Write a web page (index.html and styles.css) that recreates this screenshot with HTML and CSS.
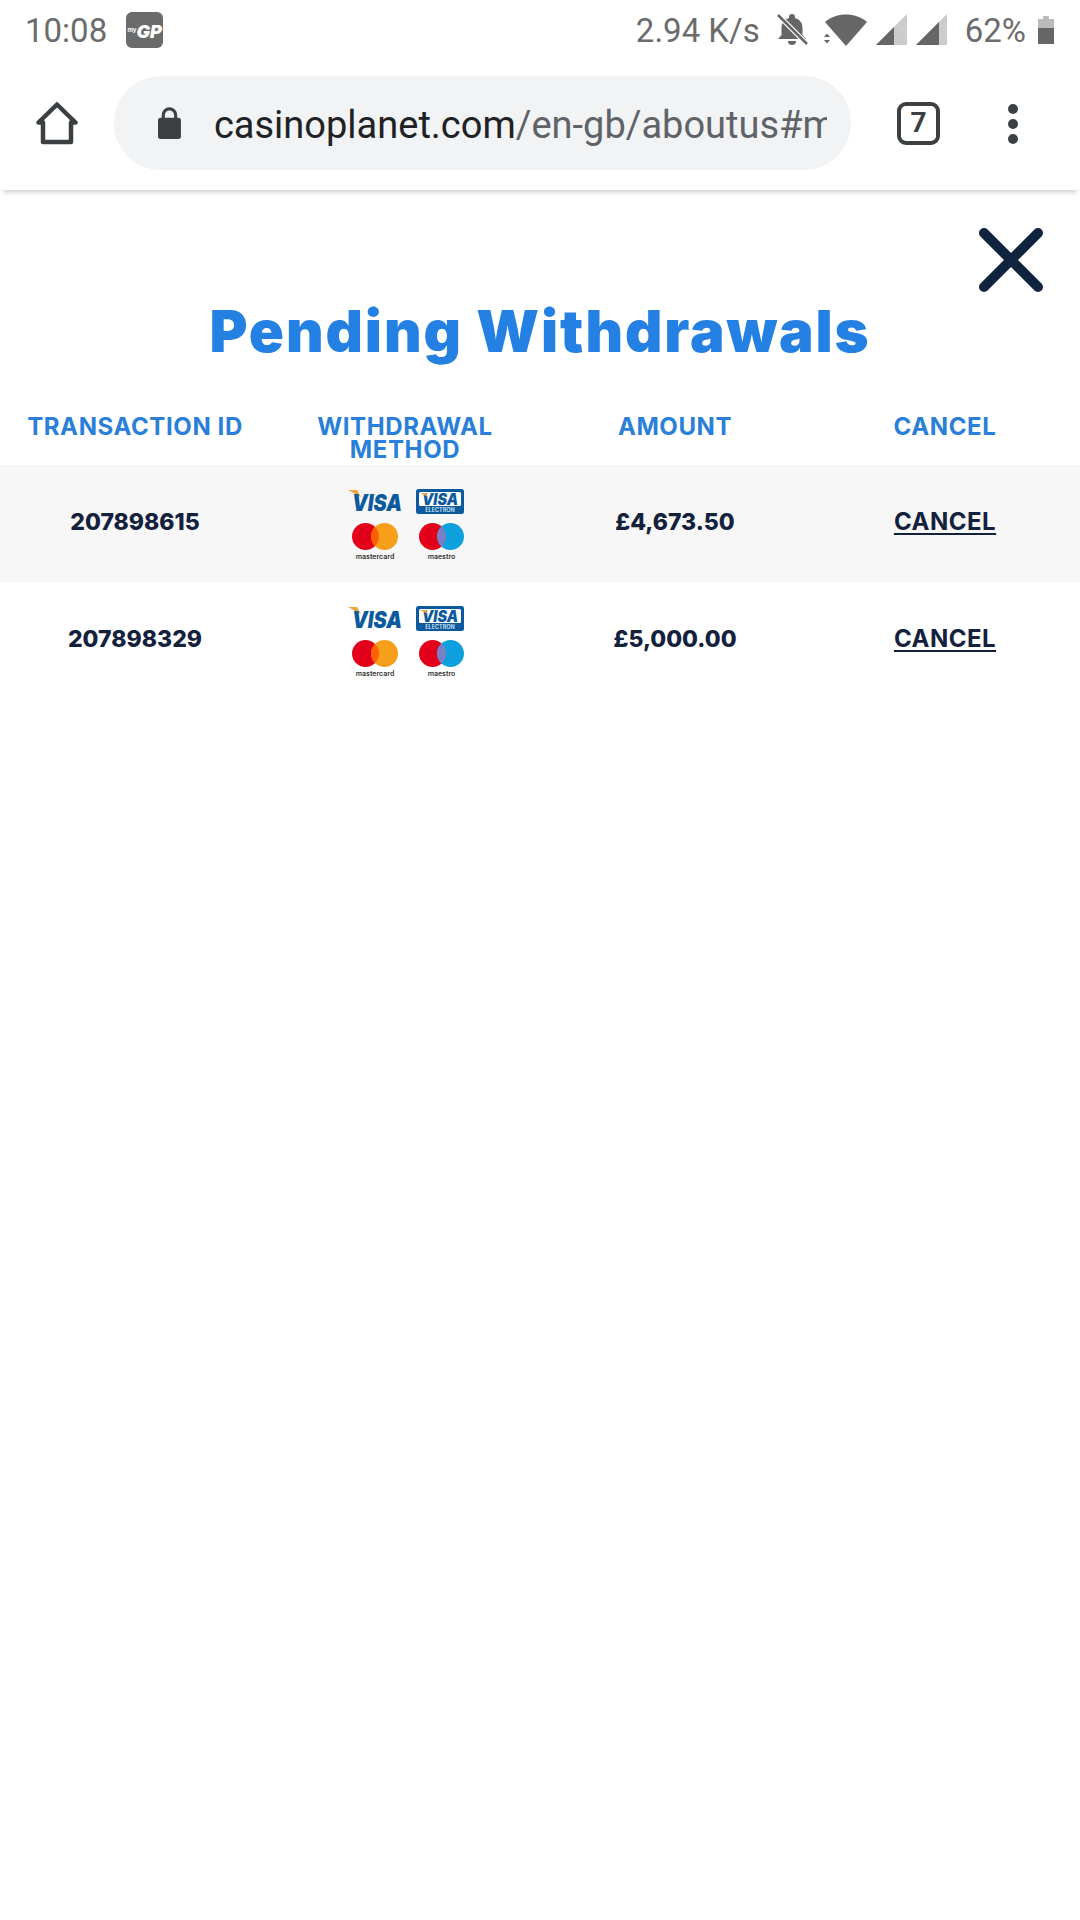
FILE: index.html
```html
<!DOCTYPE html>
<html lang="en">
<head>
  <meta charset="UTF-8">
  <meta name="viewport" content="width=device-width, initial-scale=1.0">
  <title>Pending Withdrawals</title>
  <link rel="stylesheet" href="styles.css">
</head>
<body>

  <div class="statusbar">
    <div class="status-left">
      <span>10:08</span>
      <span class="gp-badge"><small>my</small><i>GP</i></span>
    </div>
    <div class="status-right">
      <span>2.94 K/s</span>
      <svg class="ic-bell" width="32" height="34" viewBox="0 0 32 34">
        <path d="M16 1a3 3 0 0 1 3 3v1c5 1.500 7.500 5 7.500 10v7l3.500 4H2l3.500-4v-7c0-5 2.500-8.500 7.500-10V4a3 3 0 0 1 3-3z" fill="#666"/>
        <path d="M12 28h8a4 4 0 0 1-8 0z" fill="#666"/>
        <path d="M1 1l30 30" stroke="#fff" stroke-width="5"/>
        <path d="M2 2l29 29" stroke="#666" stroke-width="2.500"/>
      </svg>
      <svg class="ic-wifi" width="44" height="34" viewBox="0 0 44 34">
        <path d="M1 9C12-1 32-1 43 9L22 33z" fill="#666" transform="translate(1 0)"/>
        <path d="M1 24l3-3.500 3 3.500zM1 27l3 3.500 3-3.500z" fill="#666"/>
      </svg>
      <svg class="ic-signal" width="31" height="32" viewBox="0 0 31 32">
        <path d="M0 31L31 0v31z" fill="#ccc"/>
        <path d="M0 31L18 13v18z" fill="#666"/>
      </svg>
      <svg class="ic-signal" width="31" height="32" viewBox="0 0 31 32">
        <path d="M0 31L31 0v31z" fill="#ccc"/>
        <path d="M0 31L23 8v23z" fill="#666"/>
      </svg>
      <span class="battery-pct">62%</span>
      <svg class="ic-battery" width="16" height="28" viewBox="0 0 16 28">
        <path d="M5 0h6v3h5v25H0V3h5z" fill="#bbb"/>
        <path d="M0 12h16v16H0z" fill="#666"/>
      </svg>
    </div>
  </div>

  <div class="toolbar">
    <svg class="ic-home" width="42" height="44" viewBox="0 0 42 44">
      <path d="M2.500 21.500L21 3.500l18.500 18H35V41H7V21.500z" fill="none" stroke="#3c4043" stroke-width="4.500" stroke-linejoin="round"/>
    </svg>
    <div class="urlbar">
      <svg class="ic-lock" width="26" height="36" viewBox="0 0 26 36">
        <path d="M6 15V9a7 7 0 0 1 14 0v6" fill="none" stroke="#3c4043" stroke-width="3.500"/>
        <rect y="12" width="26" height="24" rx="3" fill="#3c4043"/>
      </svg>
      <div class="url"><span class="url-host">casinoplanet.com</span>/en-gb/aboutus#modal</div>
    </div>
    <div class="tabs">7</div>
    <div class="menu"><span></span><span></span><span></span></div>
  </div>

  <div class="modal">
    <div class="close-row">
      <svg width="66" height="66" viewBox="0 0 66 66">
        <path d="M6 6l54 54M60 6L6 60" stroke="#10233f" stroke-width="10" stroke-linecap="round"/>
      </svg>
    </div>
    <h1>Pending Withdrawals</h1>
    <table>
      <thead>
        <tr>
          <th>TRANSACTION ID</th>
          <th>WITHDRAWAL<br>METHOD</th>
          <th>AMOUNT</th>
          <th>CANCEL</th>
        </tr>
      </thead>
      <tbody>
        <tr class="odd">
          <td>207898615</td>
          <td>
            <svg class="cards" width="120" height="74" viewBox="0 0 120 74">
              <path d="M3 3h9l4 7z" fill="#f0a43a"/>
              <text x="7" y="24" class="visa-big" textLength="50" lengthAdjust="spacingAndGlyphs">VISA</text>
              <rect x="71" y="2" width="48" height="25" rx="2.500" fill="#0b5a9e"/>
              <rect x="74" y="5" width="42" height="14" rx="1.500" fill="#fff"/>
              <text x="77" y="17.500" class="visa-small" textLength="36" lengthAdjust="spacingAndGlyphs">VISA</text>
              <path d="M75 6h6l2 4z" fill="#f0a43a"/>
              <text x="95" y="25" class="electron">ELECTRON</text>
              <circle cx="20.500" cy="49.500" r="13.500" fill="#e2001a"/>
              <circle cx="39.500" cy="49.500" r="13.500" fill="#f79e1b"/>
              <path d="M30 40a13.500 13.500 0 0 1 0 19a13.500 13.500 0 0 1 0-19z" fill="#ff5f00"/>
              <text x="30" y="72" class="brand">mastercard</text>
              <circle cx="87.500" cy="49.500" r="13.500" fill="#e2001a"/>
              <circle cx="105.500" cy="49.500" r="13.500" fill="#0ea0dd"/>
              <path d="M96.500 39.500a13.500 13.500 0 0 1 0 20a13.500 13.500 0 0 1 0-20z" fill="#7b7fc4"/>
              <text x="96.500" y="72" class="brand">maestro</text>
            </svg>
          </td>
          <td>£4,673.50</td>
          <td><a href="#">CANCEL</a></td>
        </tr>
        <tr>
          <td>207898329</td>
          <td>
            <svg class="cards" width="120" height="74" viewBox="0 0 120 74">
              <path d="M3 3h9l4 7z" fill="#f0a43a"/>
              <text x="7" y="24" class="visa-big" textLength="50" lengthAdjust="spacingAndGlyphs">VISA</text>
              <rect x="71" y="2" width="48" height="25" rx="2.500" fill="#0b5a9e"/>
              <rect x="74" y="5" width="42" height="14" rx="1.500" fill="#fff"/>
              <text x="77" y="17.500" class="visa-small" textLength="36" lengthAdjust="spacingAndGlyphs">VISA</text>
              <path d="M75 6h6l2 4z" fill="#f0a43a"/>
              <text x="95" y="25" class="electron">ELECTRON</text>
              <circle cx="20.500" cy="49.500" r="13.500" fill="#e2001a"/>
              <circle cx="39.500" cy="49.500" r="13.500" fill="#f79e1b"/>
              <path d="M30 40a13.500 13.500 0 0 1 0 19a13.500 13.500 0 0 1 0-19z" fill="#ff5f00"/>
              <text x="30" y="72" class="brand">mastercard</text>
              <circle cx="87.500" cy="49.500" r="13.500" fill="#e2001a"/>
              <circle cx="105.500" cy="49.500" r="13.500" fill="#0ea0dd"/>
              <path d="M96.500 39.500a13.500 13.500 0 0 1 0 20a13.500 13.500 0 0 1 0-20z" fill="#7b7fc4"/>
              <text x="96.500" y="72" class="brand">maestro</text>
            </svg>
          </td>
          <td>£5,000.00</td>
          <td><a href="#">CANCEL</a></td>
        </tr>
      </tbody>
    </table>
  </div>

</body>
</html>
```

FILE: styles.css
```css
body {
  margin: 0;
  background-color: #fff;
  font-family: Inter, "Liberation Sans", sans-serif;
}
.statusbar {
  height: 60px;
  padding: 0 26px 0 25px;
  display: flex;
  justify-content: space-between;
  align-items: center;
  font-family: Roboto, sans-serif;
  font-size: 33px;
  color: #6b6b6b;
}
.status-left, .status-right {
  display: flex;
  align-items: center;
}
.gp-badge {
  width: 37px;
  height: 36px;
  margin-left: 19px;
  background-color: #6b6b6b;
  border-radius: 6px;
  color: #fff;
  font-family: Inter, sans-serif;
  font-size: 18px;
  font-weight: 900;
  text-align: center;
  line-height: 36px;
  white-space: nowrap;
}
.gp-badge small {
  font-size: 6px;
  font-weight: 700;
  vertical-align: 6px;
}
.ic-bell {
  margin-left: 16px;
}
.ic-wifi {
  margin-left: 15px;
}
.ic-signal {
  margin-left: 9px;
}
.battery-pct {
  margin-left: 18px;
}
.ic-battery {
  margin-left: 12px;
}
.toolbar {
  height: 130px;
  box-sizing: border-box;
  padding: 0 0 4px 36px;
  display: flex;
  align-items: center;
  box-shadow: 0 5px 5px -3px rgba(0, 0, 0, 0.22);
  position: relative;
}
.urlbar {
  width: 737px;
  height: 94px;
  margin-left: 36px;
  background-color: #f1f3f4;
  border-radius: 47px;
  display: flex;
  align-items: center;
  box-sizing: border-box;
  padding: 0 24px 0 44px;
}
.url {
  margin: 3px 0 0 33px;
  font-family: Roboto, sans-serif;
  font-size: 38px;
  color: #5f6368;
  white-space: nowrap;
  overflow: hidden;
}
.url-host {
  color: #202124;
}
.tabs {
  width: 43px;
  height: 43px;
  box-sizing: border-box;
  margin-left: 46px;
  border: 4.5px solid #3c4043;
  border-radius: 9px;
  font-family: Roboto, sans-serif;
  font-size: 28px;
  font-weight: 700;
  line-height: 34px;
  text-align: center;
  color: #3c4043;
}
.menu {
  margin: 2px 0 0 68px;
  display: flex;
  flex-direction: column;
  gap: 5px;
}
.menu span {
  width: 10px;
  height: 10px;
  border-radius: 50%;
  background-color: #3c4043;
}
.close-row {
  display: flex;
  justify-content: flex-end;
  padding: 37px 36px 0 0;
}
h1 {
  margin: 3px 0 0;
  text-align: center;
  font-size: 58px;
  font-weight: 900;
  line-height: 70px;
  letter-spacing: 1.9px;
  color: #2580e3;
}
table {
  width: 100%;
  margin-top: 49px;
  border-collapse: collapse;
  table-layout: fixed;
}
th {
  padding: 0 0 4px;
  vertical-align: top;
  font-size: 24px;
  font-weight: 700;
  line-height: 23px;
  letter-spacing: 0.6px;
  color: #2a7fd9;
}
td {
  height: 113px;
  padding: 0 0 4px;
  text-align: center;
  font-size: 23px;
  font-weight: 800;
  color: #14213d;
}
.odd td {
  background-color: #f7f7f8;
}
td a {
  color: #14213d;
  font-size: 24px;
  font-weight: 700;
  letter-spacing: 0.5px;
  text-decoration-thickness: 2px;
  text-underline-offset: 3px;
}
.cards {
  display: block;
  margin: 0 auto -4px;
}
.visa-big {
  font: italic 900 23px Inter, sans-serif;
  fill: #0b5a9e;
}
.visa-small {
  font: italic 900 16px Inter, sans-serif;
  fill: #0b5a9e;
}
.electron {
  font: 600 5.500px Inter, sans-serif;
  fill: #dbe8f4;
  text-anchor: middle;
}
.brand {
  font: 600 7px Inter, sans-serif;
  fill: #333;
  text-anchor: middle;
}
```
